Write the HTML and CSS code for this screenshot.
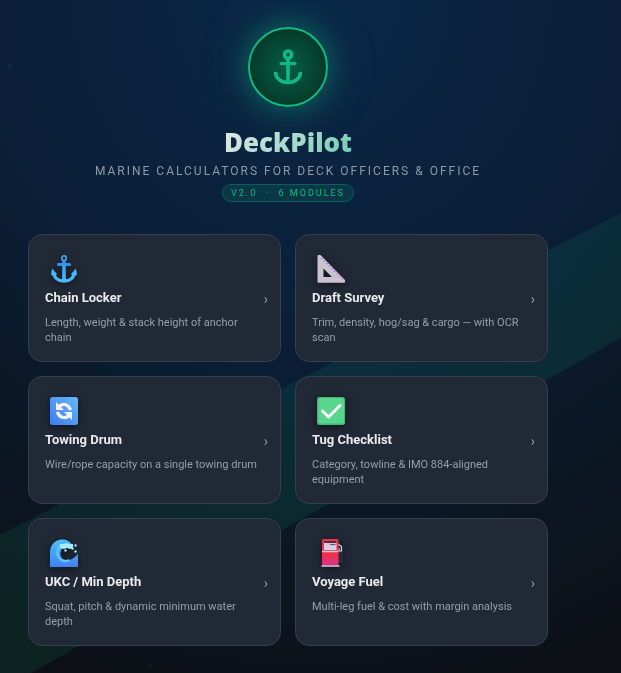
FILE: index.html
```html
<!DOCTYPE html>
<html lang="en">
<head>
    <meta charset="UTF-8">
    <meta name="viewport" content="width=device-width, initial-scale=1.0">
    <title>DeckPilot</title>
    <link rel="stylesheet" href="styles.css">
</head>
<body>
    <div class="beam"></div>
    <span class="bubble bubble-top"></span>
    <span class="bubble bubble-bottom"></span>

    <main class="page">
        <header class="hero">
            <div class="logo">
                <svg viewBox="0 0 36 36" width="36" height="36" fill="none" stroke="#10b981" stroke-width="3.6" aria-hidden="true">
                    <circle cx="18" cy="5.6" r="3.6"/>
                    <path d="M18 9v25"/>
                    <path d="M11 14.5h14" stroke-width="3" stroke-linecap="round"/>
                    <path d="M5.6 23c0 6.500 5.400 10.500 12.400 10.500S30.400 29.500 30.400 23"/>
                </svg>
            </div>
            <h1>DeckPilot</h1>
            <p class="tagline">Marine calculators for deck officers &amp; office</p>
            <span class="version">v2.0 &nbsp;·&nbsp; 6 modules</span>
        </header>

        <nav class="modules">
            <a class="card" href="#chain">
                <svg class="icon" viewBox="0 0 28 28" aria-hidden="true">
                    <defs>
                        <linearGradient id="anchorFill" x1="0" y1="0" x2="0" y2="1">
                            <stop offset="0" stop-color="#2f8fe8"/>
                            <stop offset="1" stop-color="#4cc2ff"/>
                        </linearGradient>
                    </defs>
                    <circle cx="14" cy="3.200" r="2.300" fill="none" stroke="#3ba5ee" stroke-width="1.700"/>
                    <rect x="7" y="8" width="14" height="3" rx="1.200" fill="#2f8fe8"/>
                    <rect x="12.200" y="5.500" width="3.600" height="21" fill="url(#anchorFill)"/>
                    <path d="M3.500 18c1 5 5 8 10.500 8s9.500-3 10.500-8" fill="none" stroke="#47b9fa" stroke-width="3.400"/>
                    <path d="M2 13.500 7 19 5 21 1 20zM26 13.500 21 19l2 2 4-1z" fill="#47b9fa"/>
                </svg>
                <span class="name">Chain Locker</span>
                <span class="arrow">›</span>
                <span class="desc">Length, weight &amp; stack height of anchor chain</span>
            </a>

            <a class="card" href="#draft">
                <svg class="icon" viewBox="0 0 28 28" aria-hidden="true">
                    <path fill-rule="evenodd" fill="#cbc3cd" d="M1 0h2.500L27.500 24.500a2 2 0 0 1 0 3H2a1.500 1.500 0 0 1-1.500-1.500V1zM6.500 13.500v8.500H15z"/>
                    <path d="M4.500 3 25.500 24" stroke="#9b72e8" stroke-width="1.600" stroke-dasharray="1.300 2.300"/>
                    <path d="M.5 27.500h27" stroke="#a297a6"/>
                </svg>
                <span class="name">Draft Survey</span>
                <span class="arrow">›</span>
                <span class="desc">Trim, density, hog/sag &amp; cargo — with OCR scan</span>
            </a>

            <a class="card" href="#towing">
                <svg class="icon" viewBox="0 0 28 28" aria-hidden="true">
                    <defs>
                        <linearGradient id="blueTile" x1="0" y1="1" x2="1" y2="0">
                            <stop offset="0" stop-color="#407ce8"/>
                            <stop offset="1" stop-color="#60baff"/>
                        </linearGradient>
                    </defs>
                    <rect width="28" height="28" rx="2.500" fill="url(#blueTile)"/>
                    <path d="M9 9.500c4-4 10-2 11.500 3.500M19 18.500c-4 4-10 2-11.500-3.500" fill="none" stroke="#f8efff" stroke-width="3.200"/>
                    <path d="M6 5v8h8zM22 23v-8h-8z" fill="#f8efff"/>
                </svg>
                <span class="name">Towing Drum</span>
                <span class="arrow">›</span>
                <span class="desc">Wire/rope capacity on a single towing drum</span>
            </a>

            <a class="card" href="#tug">
                <svg class="icon" viewBox="0 0 28 28" aria-hidden="true">
                    <rect width="28" height="28" rx="2.500" fill="#42b778"/>
                    <rect x="1.500" y="1" width="25.500" height="25.500" rx="2" fill="#59d68d"/>
                    <path d="m5.500 14 6 6L23 8.500" fill="none" stroke="#fbf4ff" stroke-width="3" stroke-linecap="round" stroke-linejoin="round"/>
                </svg>
                <span class="name">Tug Checklist</span>
                <span class="arrow">›</span>
                <span class="desc">Category, towline &amp; IMO 884-aligned equipment</span>
            </a>

            <a class="card" href="#ukc">
                <svg class="icon" viewBox="0 0 28 28" aria-hidden="true">
                    <defs>
                        <linearGradient id="waveFill" x1="0" y1="0" x2="0" y2="1">
                            <stop offset="0" stop-color="#4cc0fb"/>
                            <stop offset="1" stop-color="#4480ee"/>
                        </linearGradient>
                    </defs>
                    <path fill="url(#waveFill)" d="M0 28V14C0 6 5 .5 12 .5c5 0 8 2 10 5l-7 2.500C9 10 9 19 14.500 21 20 22.500 24 19 28 15v13z"/>
                    <path d="M11 6C7 9 6.500 14 8.500 18s7 5 11 3" fill="none" stroke="#57c9fa" stroke-width="2.500"/>
                    <path d="M10 5h4l2-1 3 1h4v4l-3 1-3-1-3 1-4-1z" fill="#a5eaff"/>
                    <g fill="#9eebff">
                        <circle cx="25.500" cy="6.500" r="1.200"/>
                        <circle cx="22.500" cy="9.500" r="1.200"/>
                        <circle cx="15.500" cy="11.500" r="1.200"/>
                        <circle cx="25.500" cy="12.500" r="1.200"/>
                    </g>
                </svg>
                <span class="name">UKC / Min Depth</span>
                <span class="arrow">›</span>
                <span class="desc">Squat, pitch &amp; dynamic minimum water depth</span>
            </a>

            <a class="card" href="#fuel">
                <svg class="icon" viewBox="0 0 28 28" aria-hidden="true">
                    <defs>
                        <linearGradient id="pumpFill" x1="0" y1="0" x2="0" y2="1">
                            <stop offset="0" stop-color="#ef3340"/>
                            <stop offset=".6" stop-color="#ee304c"/>
                            <stop offset="1" stop-color="#d63387"/>
                        </linearGradient>
                    </defs>
                    <path d="M20.500 5.500 24 8v4M22 12v10.500h2.500V12" fill="none" stroke="#3c3542" stroke-width="1.300"/>
                    <path d="m21 5 3.500 2.500V12H22V9" fill="none" stroke="#d9cfdf" stroke-width="1.200"/>
                    <rect x="5" width="16.500" height="26.500" rx="1.500" fill="url(#pumpFill)"/>
                    <rect x="7" y="2" width="12.500" height="9" fill="#d9cddf"/>
                    <path d="M7 2h12.500v2H7z" fill="#5e2c4b"/>
                    <path d="M13 5.500h5.500" stroke="#67546f" stroke-width="1.200"/>
                    <path d="M5 12.500h16.500M4.500 27h18" stroke="#d9cddf" stroke-width="1.300"/>
                </svg>
                <span class="name">Voyage Fuel</span>
                <span class="arrow">›</span>
                <span class="desc">Multi-leg fuel &amp; cost with margin analysis</span>
            </a>
        </nav>
    </main>
</body>
</html>
```
FILE: styles.css
```css
* {
    box-sizing: border-box;
}
body {
    margin: 0;
    min-height: 100vh;
    font-family: "Segoe UI", Roboto, "Noto Sans", sans-serif;
    color: #e8eaed;
    background: radial-gradient(ellipse 110% 105% at 50% 0%, #0a2848 0%, #0b1e36 50%, #0b1724 75%, #0d1117 100%);
}
.beam {
    position: fixed;
    inset: 0;
    z-index: -1;
    background: rgba(16, 185, 129, 0.11);
    clip-path: polygon(0 79.5%, 100% 31.6%, 100% 50.2%, 5% 100%, 0 100%);
}
.bubble {
    position: fixed;
    z-index: -1;
    width: 5px;
    height: 5px;
    border-radius: 50%;
    background: rgba(16, 185, 129, 0.12);
}
.bubble-top {
    left: 7px;
    top: 64px;
}
.bubble-bottom {
    left: 149px;
    bottom: 6px;
    width: 3px;
    height: 3px;
}
.page {
    padding: 27px 73px 26px 28px;
}
.hero {
    display: flex;
    flex-direction: column;
    align-items: center;
    text-align: center;
    margin-bottom: 32px;
}
.logo {
    display: flex;
    align-items: center;
    justify-content: center;
    width: 80px;
    height: 80px;
    border: 2px solid #10b981;
    border-radius: 50%;
    background: radial-gradient(circle, #065f46 0%, #053b2a 70%);
    box-shadow: 0 0 30px rgba(16, 185, 129, 0.45), 0 0 60px rgba(16, 185, 129, 0.15);
}
h1 {
    margin: 16px 0 0;
    font-family: "Segoe UI", "Open Sans", sans-serif;
    font-size: 26px;
    font-weight: 800;
    line-height: 38px;
    background: linear-gradient(135deg, #e8eaed 0%, #6ccdb0 100%);
    -webkit-background-clip: text;
    background-clip: text;
    color: transparent;
}
.tagline {
    margin: 0 0 3px;
    font-size: 12px;
    line-height: 20px;
    letter-spacing: 2px;
    text-transform: uppercase;
    color: #9099a6;
}
.version {
    padding: 0 8px;
    border: 1px solid rgba(16, 185, 129, 0.3);
    border-radius: 9px;
    background: rgba(16, 185, 129, 0.14);
    font-size: 9px;
    line-height: 16px;
    letter-spacing: 2px;
    text-transform: uppercase;
    color: #10b981;
}
.modules {
    display: grid;
    grid-template-columns: 1fr 1fr;
    gap: 14px;
}
.card {
    display: grid;
    grid-template-columns: 1fr auto;
    align-content: start;
    row-gap: 5px;
    min-height: 128px;
    padding: 20px 12px 16px 16px;
    border: 1px solid #353f4d;
    border-radius: 14px;
    background: #212937;
    color: inherit;
    text-decoration: none;
}
.card:hover {
    border-color: #10b981;
}
.icon {
    grid-column: 1 / -1;
    width: 28px;
    height: 28px;
    margin-left: 5px;
    filter: drop-shadow(0 2px 4px rgba(0, 0, 0, 0.5));
}
.name {
    font-size: 13px;
    font-weight: 700;
    line-height: 20px;
}
.arrow {
    font-size: 14px;
    line-height: 22px;
    color: #959eac;
}
.desc {
    grid-column: 1 / -1;
    padding-right: 6px;
    font-size: 11px;
    line-height: 15px;
    color: #959eac;
}
```
